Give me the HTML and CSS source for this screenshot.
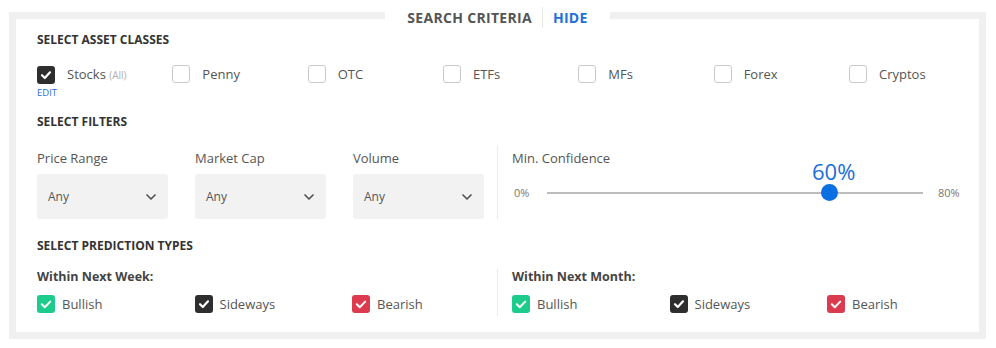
FILE: index.html
```html
<!DOCTYPE html>
<html>
<head>
<meta charset="utf-8">
<link rel="stylesheet" href="styles.css">
</head>
<body>
<div class="panel">
  <div class="legend">
    <span class="legend-title">SEARCH CRITERIA</span>
    <span class="legend-sep"></span>
    <span class="legend-hide">HIDE</span>
  </div>

  <h3 class="section-title first">SELECT ASSET CLASSES</h3>
  <div class="asset-row">
    <div class="asset">
      <label class="check asset-check">
        <span class="box box-dark"><svg viewBox="0 0 18 18" width="18" height="18"><polyline points="5,9.2 7.8,12 13,6.3" fill="none" stroke="#fff" stroke-width="2.2" stroke-linecap="round" stroke-linejoin="round"/></svg></span>
        <span class="check-label">Stocks <span class="muted">(All)</span></span>
      </label>
      <span class="edit">EDIT</span>
    </div>
    <div class="asset"><label class="check asset-check"><span class="box box-empty"></span><span class="check-label">Penny</span></label></div>
    <div class="asset"><label class="check asset-check"><span class="box box-empty"></span><span class="check-label">OTC</span></label></div>
    <div class="asset"><label class="check asset-check"><span class="box box-empty"></span><span class="check-label">ETFs</span></label></div>
    <div class="asset"><label class="check asset-check"><span class="box box-empty"></span><span class="check-label">MFs</span></label></div>
    <div class="asset"><label class="check asset-check"><span class="box box-empty"></span><span class="check-label">Forex</span></label></div>
    <div class="asset"><label class="check asset-check"><span class="box box-empty"></span><span class="check-label">Cryptos</span></label></div>
  </div>

  <h3 class="section-title filters-title">SELECT FILTERS</h3>
  <div class="halves filters-halves">
    <div class="half half-left">
      <div class="filters">
        <div class="filter">
          <div class="filter-label">Price Range</div>
          <div class="select"><span>Any</span><svg viewBox="0 0 10 6" width="10" height="6"><polyline points="1,1 5,5 9,1" fill="none" stroke="#555" stroke-width="1.7" stroke-linecap="round" stroke-linejoin="round"/></svg></div>
        </div>
        <div class="filter">
          <div class="filter-label">Market Cap</div>
          <div class="select"><span>Any</span><svg viewBox="0 0 10 6" width="10" height="6"><polyline points="1,1 5,5 9,1" fill="none" stroke="#555" stroke-width="1.7" stroke-linecap="round" stroke-linejoin="round"/></svg></div>
        </div>
        <div class="filter">
          <div class="filter-label">Volume</div>
          <div class="select"><span>Any</span><svg viewBox="0 0 10 6" width="10" height="6"><polyline points="1,1 5,5 9,1" fill="none" stroke="#555" stroke-width="1.7" stroke-linecap="round" stroke-linejoin="round"/></svg></div>
        </div>
      </div>
    </div>
    <div class="half half-right">
      <div class="filter-label">Min. Confidence</div>
      <div class="slider">
        <span class="slider-min">0%</span>
        <div class="track">
          <div class="thumb" style="left: 75%;"><span class="thumb-value">60%</span></div>
        </div>
        <span class="slider-max">80%</span>
      </div>
    </div>
  </div>

  <h3 class="section-title pred-title">SELECT PREDICTION TYPES</h3>
  <div class="halves pred-halves">
    <div class="half half-left">
      <div class="group-title">Within Next Week:</div>
      <div class="pred-row">
        <label class="check pred-check"><span class="box box-green"><svg viewBox="0 0 18 18" width="18" height="18"><polyline points="4.8,9.2 7.8,12.2 13.2,6.6" fill="none" stroke="#fff" stroke-width="2" stroke-linecap="round" stroke-linejoin="round"/></svg></span><span class="check-label">Bullish</span></label>
        <label class="check pred-check"><span class="box box-dark"><svg viewBox="0 0 18 18" width="18" height="18"><polyline points="5,9.2 7.8,12 13,6.3" fill="none" stroke="#fff" stroke-width="2.2" stroke-linecap="round" stroke-linejoin="round"/></svg></span><span class="check-label">Sideways</span></label>
        <label class="check pred-check"><span class="box box-red"><svg viewBox="0 0 18 18" width="18" height="18"><polyline points="4.8,9.2 7.8,12.2 13.2,6.6" fill="none" stroke="#fff" stroke-width="2" stroke-linecap="round" stroke-linejoin="round"/></svg></span><span class="check-label">Bearish</span></label>
      </div>
    </div>
    <div class="half half-right">
      <div class="group-title">Within Next Month:</div>
      <div class="pred-row">
        <label class="check pred-check"><span class="box box-green"><svg viewBox="0 0 18 18" width="18" height="18"><polyline points="4.8,9.2 7.8,12.2 13.2,6.6" fill="none" stroke="#fff" stroke-width="2" stroke-linecap="round" stroke-linejoin="round"/></svg></span><span class="check-label">Bullish</span></label>
        <label class="check pred-check"><span class="box box-dark"><svg viewBox="0 0 18 18" width="18" height="18"><polyline points="5,9.2 7.8,12 13,6.3" fill="none" stroke="#fff" stroke-width="2.2" stroke-linecap="round" stroke-linejoin="round"/></svg></span><span class="check-label">Sideways</span></label>
        <label class="check pred-check"><span class="box box-red"><svg viewBox="0 0 18 18" width="18" height="18"><polyline points="4.8,9.2 7.8,12.2 13.2,6.6" fill="none" stroke="#fff" stroke-width="2" stroke-linecap="round" stroke-linejoin="round"/></svg></span><span class="check-label">Bearish</span></label>
      </div>
    </div>
  </div>
</div>
</body>
</html>
```

FILE: styles.css
```css
* { box-sizing: border-box; }

html, body {
  margin: 0;
  padding: 0;
  background: #fff;
}

body {
  font-family: "Open Sans", "Noto Sans", "DejaVu Sans", sans-serif;
  color: #444;
  padding: 12px 10px 9px 9px;
}

.panel {
  position: relative;
  width: 977px;
  height: 327px;
  border: 7px solid #f0f0f0;
  padding: 0 21px;
}

.legend {
  position: absolute;
  top: -14px;
  left: calc(50% - 112.5px);
  width: 225px;
  height: 25px;
  background: #fff;
  display: flex;
  align-items: center;
  justify-content: center;
}

.legend-title {
  font-size: 14px;
  font-weight: 700;
  color: #555;
  letter-spacing: 0.3px;
}

.legend-sep {
  width: 1px;
  height: 21px;
  background: #e6e6e6;
  margin: 0 10px;
}

.legend-hide {
  font-size: 14px;
  font-weight: 700;
  color: #2070d8;
  letter-spacing: 0.3px;
}

.section-title {
  margin: 0;
  font-size: 12px;
  line-height: 16px;
  font-weight: 700;
  color: #333;
}

.section-title.first { margin-top: 13px; }
.section-title.filters-title { margin-top: 16px; }
.section-title.pred-title { margin-top: 19px; }

.asset-row {
  margin-top: 17px;
  display: grid;
  grid-template-columns: repeat(6, 135.33px) 1fr;
  height: 33px;
}

.check {
  display: flex;
  align-items: center;
}

.box {
  width: 18px;
  height: 18px;
  border-radius: 3px;
  flex: none;
  display: block;
}

.box svg { display: block; }

.box-empty {
  border: 1px solid #c9c9c9;
  background: #fff;
}

.box-dark { background: #2e2e2e; }
.box-green { background: #1dcb8d; }
.box-red { background: #dc3a4e; }

.check-label {
  font-size: 13px;
  line-height: 18px;
  color: #555;
}

.asset-check .check-label { margin-left: 12px; }
.pred-check .check-label { margin-left: 7px; }

.muted {
  font-size: 10px;
  color: #b0b0b0;
}

.edit {
  display: block;
  margin-top: 3px;
  font-size: 9.5px;
  line-height: 12px;
  color: #2a6fdb;
}

.halves {
  display: grid;
  grid-template-columns: 460px 1fr;
}

.filters-halves { margin-top: 15px; }
.pred-halves { margin-top: 15px; }

.half-right {
  border-left: 1px solid #ececec;
  padding-left: 14px;
}

.filters-halves .half { padding-top: 3.5px; }

.filters {
  display: grid;
  grid-template-columns: repeat(3, 131px);
  column-gap: 27px;
}

.filter-label {
  font-size: 13px;
  line-height: 18px;
  color: #555;
}

.select {
  margin-top: 7.5px;
  height: 45px;
  background: #f2f2f2;
  border-radius: 3px;
  display: flex;
  align-items: center;
  justify-content: space-between;
  padding: 0 12px 0 11px;
  font-size: 12px;
  color: #555;
}

.slider {
  display: flex;
  align-items: center;
  margin-top: 17px;
  height: 18px;
}

.slider-min {
  width: 35px;
  font-size: 11px;
  color: #777;
  padding-left: 2px;
}

.slider-max {
  margin-left: 15px;
  font-size: 11px;
  color: #777;
}

.track {
  position: relative;
  width: 376px;
  height: 2px;
  background: #bdbdbd;
}

.thumb {
  position: absolute;
  top: 50%;
  width: 17px;
  height: 17px;
  margin: -8.5px 0 0 -8.5px;
  border-radius: 50%;
  background: #0b6fe4;
}

.thumb-value {
  position: absolute;
  bottom: 17px;
  left: -8.5px;
  font-size: 22px;
  line-height: 25px;
  color: #1a6dd8;
  white-space: nowrap;
}

.group-title {
  font-size: 12.5px;
  line-height: 16px;
  font-weight: 700;
  color: #444;
}

.pred-halves .half { padding-bottom: 3px; }

.pred-row {
  margin-top: 10px;
  display: grid;
  grid-template-columns: repeat(3, 157.5px);
}
```
